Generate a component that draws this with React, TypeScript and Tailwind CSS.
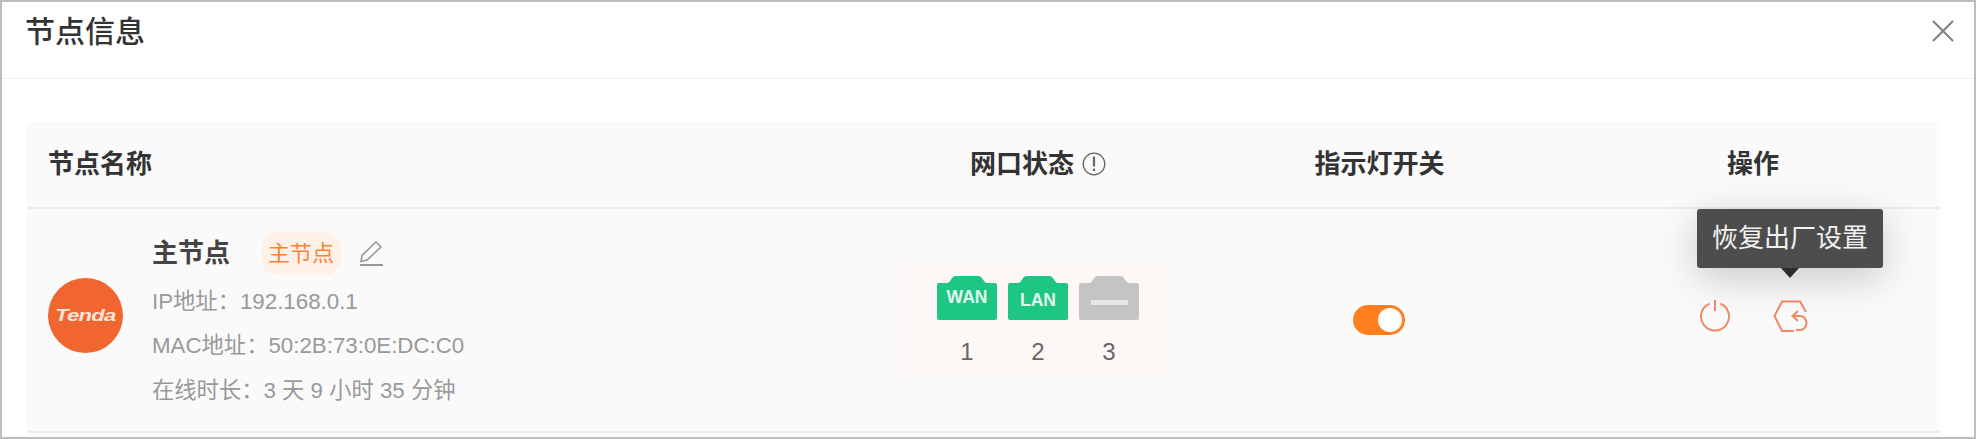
import React from 'react';

const gridCols = 'grid grid-cols-[856px_310px_373px_1fr]';

const PortShape: React.FC<{ fill: string }> = ({ fill }) => (
  <svg viewBox="0 0 60 44" className="absolute inset-0 w-full h-full">
    <path
      fill={fill}
      d="M2 7H10Q12 7 13 5L15.5 1.5Q16.5 0 18.5 0H41.5Q43.5 0 44.5 1.5L47 5Q48 7 50 7H58Q60 7 60 9V42Q60 44 58 44H2Q0 44 0 42V9Q0 7 2 7Z"
    />
  </svg>
);

const Port: React.FC<{ label?: string; num: number; offset?: string }> = ({ label, num, offset }) => (
  <div className="flex flex-col items-center w-[60px]">
    <div className="relative w-[60px] h-[44px] flex items-center justify-center">
      <PortShape fill={label ? '#1dc683' : '#c4c4c4'} />
      {label ? (
        <span className={`relative text-[17.5px] leading-none font-bold text-[#e2f8ee] ${offset}`}>{label}</span>
      ) : (
        <span className="relative w-[37px] h-[5px] mt-[9px] bg-[#e6e6e6]"></span>
      )}
    </div>
    <span className="mt-[16px] text-[24px] leading-[32px] text-[#666666]">{num}</span>
  </div>
);

export default function App() {
  return (
    <div className="h-[439px] box-border border-2 border-[#bdbdbd] bg-white overflow-hidden text-[#333333] [font-family:'Liberation_Sans','Noto_Sans_CJK_SC',sans-serif]">
      {/* Header */}
      <div className="h-[77px] box-border border-b border-[#f0f0f0] flex justify-between items-start pl-[23px] pr-[20px]">
        <h1 className="mt-[8px] text-[30px] leading-[44px] font-medium text-[#333333]">节点信息</h1>
        <svg width="22" height="22" viewBox="0 0 22 22" className="mt-[18px]" stroke="#808080" strokeWidth="2">
          <path d="M1 1L21 21M21 1L1 21" />
        </svg>
      </div>

      {/* Table */}
      <div className="mt-[43px] ml-[25px] mr-[34px] bg-[#fafafa]">
        <div className={`${gridCols} h-[87px] box-border border-b-2 border-[#ececec] items-center text-[26px] font-bold text-[#333333]`}>
          <div className="pl-[21px]">节点名称</div>
          <div className="flex items-center justify-center gap-[8px]">
            网口状态
            <svg width="24" height="24" viewBox="0 0 24 24" fill="none" stroke="#666666" strokeWidth="1.3" className="-mt-[2px]">
              <circle cx="12" cy="12" r="10.8" />
              <path d="M12 4.5V14.5" strokeWidth="2.2" />
              <path d="M12 16.6V19" strokeWidth="2.2" />
            </svg>
          </div>
          <div className="text-center">指示灯开关</div>
          <div className="text-center">操作</div>
        </div>

        <div className={`${gridCols} h-[224px] box-border border-b-2 border-[#ececec] items-center`}>
          {/* Node info */}
          <div className="flex items-center pl-[21px]">
            <div className="w-[75px] h-[75px] mb-[10px] shrink-0 rounded-full bg-[#f1662f] flex items-center justify-center">
              <span className="text-[17px] leading-none italic font-semibold tracking-[-0.6px] scale-x-[1.3] text-[#fbe6dc]">Tenda</span>
            </div>
            <div className="ml-[29px] mt-[5px]">
              <div className="flex items-center h-[43px]">
                <span className="text-[26px] font-bold text-[#444444]">主节点</span>
                <span className="ml-[31px] w-[80px] h-[43px] rounded-[16px] bg-[#fdf1e8] flex items-center justify-center text-[22px] text-[#ff8133]">
                  主节点
                </span>
                <svg width="25" height="26" viewBox="0 0 25 26" fill="none" stroke="#999999" strokeWidth="1.6" className="ml-[18px]">
                  <path d="M17 2L22 7L8 20L2 21.5L3 15.5Z" />
                  <path d="M1 25H24" strokeWidth="2" />
                </svg>
              </div>
              <div className="mt-[4px] text-[22.3px] leading-[44.5px] text-[#999999]">
                <div className="pt-[1px]">IP地址：192.168.0.1</div>
                <div>MAC地址：50:2B:73:0E:DC:C0</div>
                <div>在线时长：3 天 9 小时 35 分钟</div>
              </div>
            </div>
          </div>

          {/* Ports */}
          <div className="flex justify-center">
            <div className="flex gap-[11px] px-[32px] pt-[14px] pb-[10px] bg-[#fdf8f5]">
              <Port label="WAN" num={1} offset="-mt-[0px]" />
              <Port label="LAN" num={2} offset="mt-[5px]" />
              <Port num={3} />
            </div>
          </div>

          {/* Light switch */}
          <div className="flex justify-center">
            <div className="w-[52px] h-[30px] mr-[2px] rounded-full bg-[#ff7f1f] flex items-center justify-end pr-[3px]">
              <div className="w-[24px] h-[24px] rounded-full bg-white"></div>
            </div>
          </div>

          {/* Actions */}
          <div className="flex justify-center items-center gap-[42px] mb-[8px]">
            <svg width="32" height="32" viewBox="0 0 32 32" fill="none" stroke="#ef8a63" strokeWidth="2">
              <path d="M10.5 3.6A14 14 0 1 0 21.5 3.6" />
              <path d="M16 0V11" />
            </svg>
            <div className="relative w-[35px] h-[33px]">
              <svg width="35" height="33" viewBox="0 0 35 33" fill="none" stroke="#ef8a63" strokeWidth="2">
                <path d="M33 12L27 1.5H9L1.5 16L9 31H21" />
                <path d="M20 16H27A6.5 7 0 0 1 27 30H23" />
                <path d="M25 11L19.5 16L25 21" />
              </svg>
              <div className="absolute left-1/2 -translate-x-1/2 bottom-[calc(100%+32px)] w-[186px] h-[59px] rounded-[3px] bg-[#4d4d4d] flex items-center justify-center text-[26px] text-[#f2f2f2] shadow-[0_10px_40px_rgba(0,0,0,0.2)]">
                恢复出厂设置
                <span className="absolute left-1/2 -translate-x-1/2 top-full border-x-[9px] border-t-[10px] border-x-transparent border-t-[#2b2b2b]"></span>
              </div>
            </div>
          </div>
        </div>
      </div>
    </div>
  );
}
